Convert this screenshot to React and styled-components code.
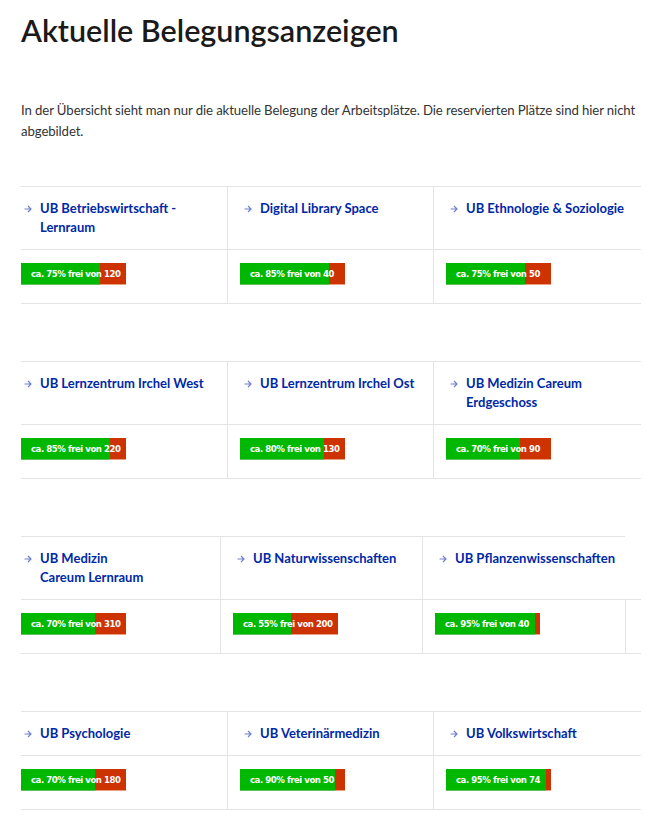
import styled, {createGlobalStyle} from 'styled-components';

const GlobalStyle = createGlobalStyle`
  body {
    margin: 0;
    background: #fff;
    font-family: 'Lato', 'Open Sans', sans-serif;
    color: #333;
  }
`;

const Page = styled.main`
  width: 620px;
  padding: 12px 0 0 21px;
`;

const Title = styled.h1`
  margin: 0;
  font-size: 30.5px;
  line-height: 36px;
  font-weight: 600;
  color: #1a1a1a;
`;

const Intro = styled.p`
  margin: 52px 0 44px;
  font-size: 13.2px;
  letter-spacing: -0.1px;
  line-height: 21px;
  color: #333;
`;

const Table = styled.div`
  display: grid;
  grid-template-columns: ${({$cols}) => $cols};
  border-bottom: 1px solid #e4e4e4;
  margin-bottom: 57px;
`;

const HeadCell = styled.div`
  border-top: 1px solid #e4e4e4;
  border-left: ${({$first}) => ($first ? 'none' : '1px solid #e4e4e4')};
  padding: 12px 6px 12px ${({$first}) => ($first ? '3px' : '16px')};
  display: flex;
  align-items: flex-start;
  gap: 8px;
`;

const Filler = styled.div``;

const BodyCell = styled.div`
  border-top: 1px solid #e4e4e4;
  border-left: ${({$first}) => ($first ? 'none' : '1px solid #e4e4e4')};
  padding: 13px 6px 18px ${({$first}) => ($first ? '0' : '12px')};
`;

const EmptyCell = styled.div`
  border-top: 1px solid #e4e4e4;
  border-left: 1px solid #e4e4e4;
  min-width: 0;
`;

const Link = styled.a`
  font-size: 13px;
  line-height: 19px;
  font-weight: 700;
  color: #0028a5;
  text-decoration: none;
`;

const Arrow = styled.svg`
  flex: none;
  margin-top: 6px;
`;

const Bar = styled.div`
  position: relative;
  width: 105px;
  height: 22px;
  background: #cc3300;
  border-bottom: 1px solid #e8a080;
  box-sizing: border-box;
  display: flex;
`;

const Free = styled.div`
  background: #00b800;
  height: 21px;
  border-bottom: 1px solid #60c060;
  box-sizing: content-box;
`;

const BarLabel = styled.span`
  position: absolute;
  left: 10px;
  top: 0;
  line-height: 21px;
  font-family: 'Liberation Sans Narrow', 'DejaVu Sans Condensed', 'Liberation Sans', sans-serif;
  font-weight: 700;
  font-size: 9.5px;
  letter-spacing: -0.45px;
  color: #fff;
  white-space: nowrap;
`;

const ArrowIcon = () => (
  <Arrow width="8" height="8" viewBox="0 0 8 8">
    <path d="M0.5 4h6.5M4 1l3 3-3 3" fill="none" stroke="#7080d0" strokeWidth="1.2" />
  </Arrow>
);

const Occupancy = ({free, total}) => (
  <Bar>
    <Free style={{width: `${free}%`}} />
    <BarLabel>
      ca. {free}% frei von {total}
    </BarLabel>
  </Bar>
);

const groups = [
  {
    cols: '206px 206px 1fr',
    items: [
      {name: ['UB Betriebswirtschaft -', 'Lernraum'], free: 75, total: 120},
      {name: ['Digital Library Space'], free: 85, total: 40},
      {name: ['UB Ethnologie & Soziologie'], free: 75, total: 50},
    ],
  },
  {
    cols: '206px 206px 1fr',
    items: [
      {name: ['UB Lernzentrum Irchel West'], free: 85, total: 220},
      {name: ['UB Lernzentrum Irchel Ost'], free: 80, total: 130},
      {name: ['UB Medizin Careum', 'Erdgeschoss'], free: 70, total: 90},
    ],
  },
  {
    cols: '199px 202px 203px 1fr',
    extra: true,
    items: [
      {name: ['UB Medizin', 'Careum Lernraum'], free: 70, total: 310},
      {name: ['UB Naturwissenschaften'], free: 55, total: 200},
      {name: ['UB Pflanzenwissenschaften'], free: 95, total: 40},
    ],
  },
  {
    cols: '206px 206px 1fr',
    items: [
      {name: ['UB Psychologie'], free: 70, total: 180},
      {name: ['UB Veterinärmedizin'], free: 90, total: 50},
      {name: ['UB Volkswirtschaft'], free: 95, total: 74},
    ],
  },
];

const App = () => (
  <>
    <GlobalStyle />
    <Page>
      <Title>Aktuelle Belegungsanzeigen</Title>
      <Intro>
        In der Übersicht sieht man nur die aktuelle Belegung der Arbeitsplätze. Die reservierten
        Plätze sind hier nicht abgebildet.
      </Intro>
      {groups.map((group, i) => (
        <Table key={i} $cols={group.cols}>
          {group.items.map((item, k) => (
            <HeadCell key={item.name[0]} $first={k === 0}>
              <ArrowIcon />
              <Link href="#">
                {item.name.map((line, j) => (
                  <span key={j}>
                    {j > 0 && <br />}
                    {line}
                  </span>
                ))}
              </Link>
            </HeadCell>
          ))}
          {group.extra && <Filler />}
          {group.items.map((item, k) => (
            <BodyCell key={item.name[0]} $first={k === 0}>
              <Occupancy free={item.free} total={item.total} />
            </BodyCell>
          ))}
          {group.extra && <EmptyCell />}
        </Table>
      ))}
    </Page>
  </>
);

export default App;
